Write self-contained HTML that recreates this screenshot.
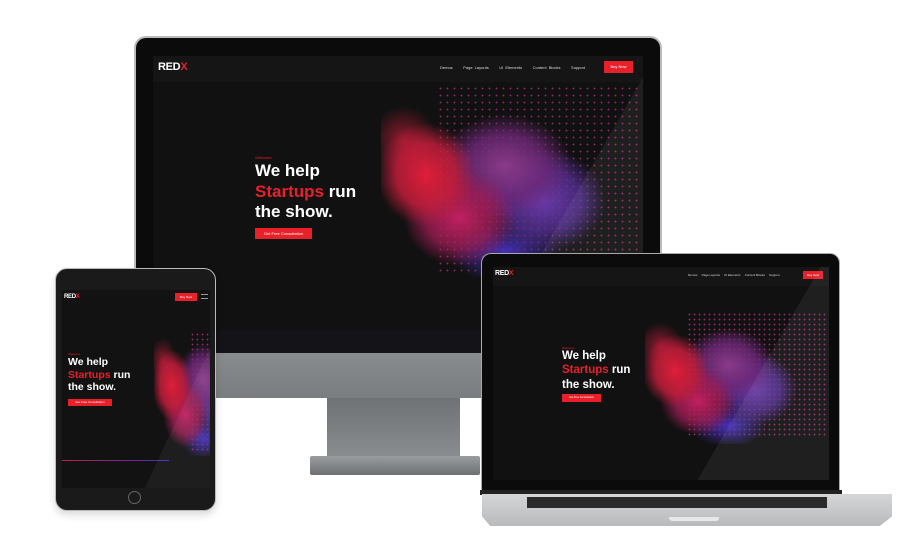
<!DOCTYPE html>
<html><head><meta charset="utf-8"><style>
*{margin:0;padding:0;box-sizing:border-box}
body{width:900px;height:533px;background:#fff;position:relative;overflow:hidden;font-family:"Liberation Sans",sans-serif}
.a{position:absolute}
.scr{background:#111;overflow:hidden}
.logo{color:#fff;font-weight:bold;letter-spacing:-0.3px}
.logo b{color:#e8202a}
.red{color:#e8202a}
.btn{background:#e8202a;color:#fff;text-align:center}
.dots{background-image:radial-gradient(circle,rgba(190,50,130,.75) 0.7px,transparent 1.1px);}
.splash{background:
 radial-gradient(ellipse 22% 30% at 20% 40%,#e01e3a 0%,rgba(200,30,60,.8) 60%,transparent 100%),
 radial-gradient(ellipse 25% 28% at 35% 65%,#c02060 0%,rgba(170,30,90,.7) 60%,transparent 100%),
 radial-gradient(ellipse 30% 30% at 55% 35%,#8a3a8a 0%,rgba(110,40,120,.8) 60%,transparent 100%),
 radial-gradient(ellipse 28% 30% at 72% 55%,#6a3aa8 0%,rgba(90,50,160,.7) 60%,transparent 100%),
 radial-gradient(ellipse 25% 18% at 55% 85%,#4630b8 0%,transparent 100%),
 radial-gradient(ellipse 15% 20% at 10% 20%,rgba(200,30,60,.7) 0%,transparent 100%);}
</style></head><body>

<!-- Monitor -->
<div class="a" style="left:134px;top:36px;width:528px;height:297px;background:#0b0b0b;border-radius:12px 12px 0 0;border:2px solid #bbb;border-bottom:none"></div>
<div class="a" style="left:136px;top:330px;width:524px;height:24px;background:#141418"></div>
<div class="a" style="left:136px;top:353px;width:524px;height:45px;background:linear-gradient(#888b8d,#7a7d80)"></div>
<div class="a" style="left:327px;top:398px;width:133px;height:60px;background:linear-gradient(#6f7275,#8a8d90)"></div>
<div class="a" style="left:310px;top:456px;width:170px;height:19px;background:linear-gradient(#9a9d9f,#6d7073);border-radius:2px"></div>

<div class="a scr" style="left:153px;top:56px;width:490px;height:274px">
  <div class="a" style="left:0;top:0;width:490px;height:26px;background:#151515"></div>
  <div class="a logo" style="left:5px;top:5px;font-size:11px">RED<b>X</b></div>
  <div class="a" style="left:287px;top:9px;font-size:4px;color:#ddd;white-space:nowrap;word-spacing:1px">Demos &nbsp;&nbsp;&nbsp; Page Layouts &nbsp;&nbsp;&nbsp; UI Elements &nbsp;&nbsp;&nbsp; Content Blocks &nbsp;&nbsp;&nbsp; Support</div>
  <div class="a btn" style="left:451px;top:5px;width:29px;height:12px;font-size:4px;line-height:12px">Buy Now</div>
  <div class="a dots" style="left:284px;top:29px;width:204px;height:188px;background-size:7px 7px"></div>
  <div class="a splash" style="left:228px;top:50px;width:225px;height:172px"></div>
  <div class="a red" style="left:102px;top:99px;font-size:4px">Welcome</div>
  <div class="a" style="left:102px;top:105px;font-size:17px;line-height:20.5px;color:#fff;font-weight:bold">We help<br><span class="red">Startups</span> run<br>the show.</div>
  <div class="a btn" style="left:102px;top:172px;width:57px;height:11px;font-size:4px;line-height:11px">Get Free Consultation</div>
  <div class="a" style="left:280px;top:-20px;width:400px;height:320px;background:linear-gradient(120deg,transparent 40%,rgba(255,255,255,.06) 40%);"></div>
</div>

<!-- Tablet -->
<div class="a" style="left:55px;top:268px;width:161px;height:243px;background:#1a1a1a;border-radius:12px;border:1.5px solid #bbb;box-shadow:0 4px 8px rgba(0,0,0,.15)"></div>
<div class="a scr" style="left:62px;top:290px;width:148px;height:198px;background:#121212">
  <div class="a logo" style="left:2px;top:4px;font-size:6px">RED<b>X</b></div>
  <div class="a btn" style="left:113px;top:3px;width:22px;height:8px;font-size:3px;line-height:8px">Buy Now</div>
  <div class="a" style="left:139px;top:4px;width:7px;height:5px;border-top:1px solid #999;border-bottom:1px solid #999"></div>
  <div class="a dots" style="left:128px;top:42px;width:20px;height:120px;background-size:5px 5px"></div>
  <div class="a splash" style="left:92px;top:48px;width:90px;height:118px"></div>
  <div class="a red" style="left:6px;top:62px;font-size:3px">Welcome</div>
  <div class="a" style="left:6px;top:66px;font-size:10.5px;line-height:12.5px;color:#fff;font-weight:bold">We help<br><span class="red">Startups</span> run<br>the show.</div>
  <div class="a btn" style="left:6px;top:109px;width:44px;height:7px;font-size:3px;line-height:7px">Get Free Consultation</div>
  <div class="a" style="left:0;top:170px;width:107px;height:1px;background:linear-gradient(90deg,#c02040,#4030c0)"></div>
  <div class="a" style="left:40px;top:-20px;width:200px;height:260px;background:linear-gradient(115deg,transparent 45%,rgba(255,255,255,.05) 45%)"></div>
</div>
<div class="a" style="left:128px;top:491px;width:13px;height:13px;border-radius:50%;border:1.3px solid #666"></div>

<!-- Laptop -->
<div class="a" style="left:481px;top:253px;width:359px;height:240px;background:#0b0b0b;border-radius:10px 10px 0 0;border:1.5px solid #aaa;border-bottom:none"></div>
<div class="a scr" style="left:493px;top:267px;width:336px;height:213px">
  <div class="a" style="left:0;top:0;width:336px;height:19px;background:#151515"></div>
  <div class="a logo" style="left:2px;top:3px;font-size:7px">RED<b>X</b></div>
  <div class="a" style="left:195px;top:6px;font-size:3px;color:#ddd;white-space:nowrap">Demos &nbsp;&nbsp;&nbsp; Page Layouts &nbsp;&nbsp;&nbsp; UI Elements &nbsp;&nbsp;&nbsp; Content Blocks &nbsp;&nbsp;&nbsp; Support</div>
  <div class="a btn" style="left:310px;top:4px;width:20px;height:8px;font-size:3px;line-height:8px">Buy Now</div>
  <div class="a dots" style="left:194px;top:45px;width:140px;height:125px;background-size:5px 5px"></div>
  <div class="a splash" style="left:152px;top:55px;width:152px;height:122px"></div>
  <div class="a red" style="left:69px;top:79px;font-size:3px">Welcome</div>
  <div class="a" style="left:69px;top:82px;font-size:11.5px;line-height:14.3px;color:#fff;font-weight:bold">We help<br><span class="red">Startups</span> run<br>the show.</div>
  <div class="a btn" style="left:69px;top:127px;width:39px;height:8px;font-size:2.5px;line-height:8px">Get Free Consultation</div>
  <div class="a" style="left:150px;top:-20px;width:300px;height:260px;background:linear-gradient(120deg,transparent 42%,rgba(255,255,255,.06) 42%)"></div>
</div>
<div class="a" style="left:480px;top:490px;width:362px;height:5px;background:#222"></div>
<div class="a" style="left:482px;top:494px;width:410px;height:32px;background:linear-gradient(#d5d6d8,#b8babc);clip-path:polygon(0 0,100% 0,100% 70%,97% 100%,2% 100%,0 70%);border-radius:0 0 6px 6px"></div>
<div class="a" style="left:527px;top:497px;width:300px;height:11px;background:#2a2a2a"></div>
<div class="a" style="left:669px;top:517px;width:50px;height:4px;background:#e8e8e8;border-radius:0 0 3px 3px"></div>

</body></html>
